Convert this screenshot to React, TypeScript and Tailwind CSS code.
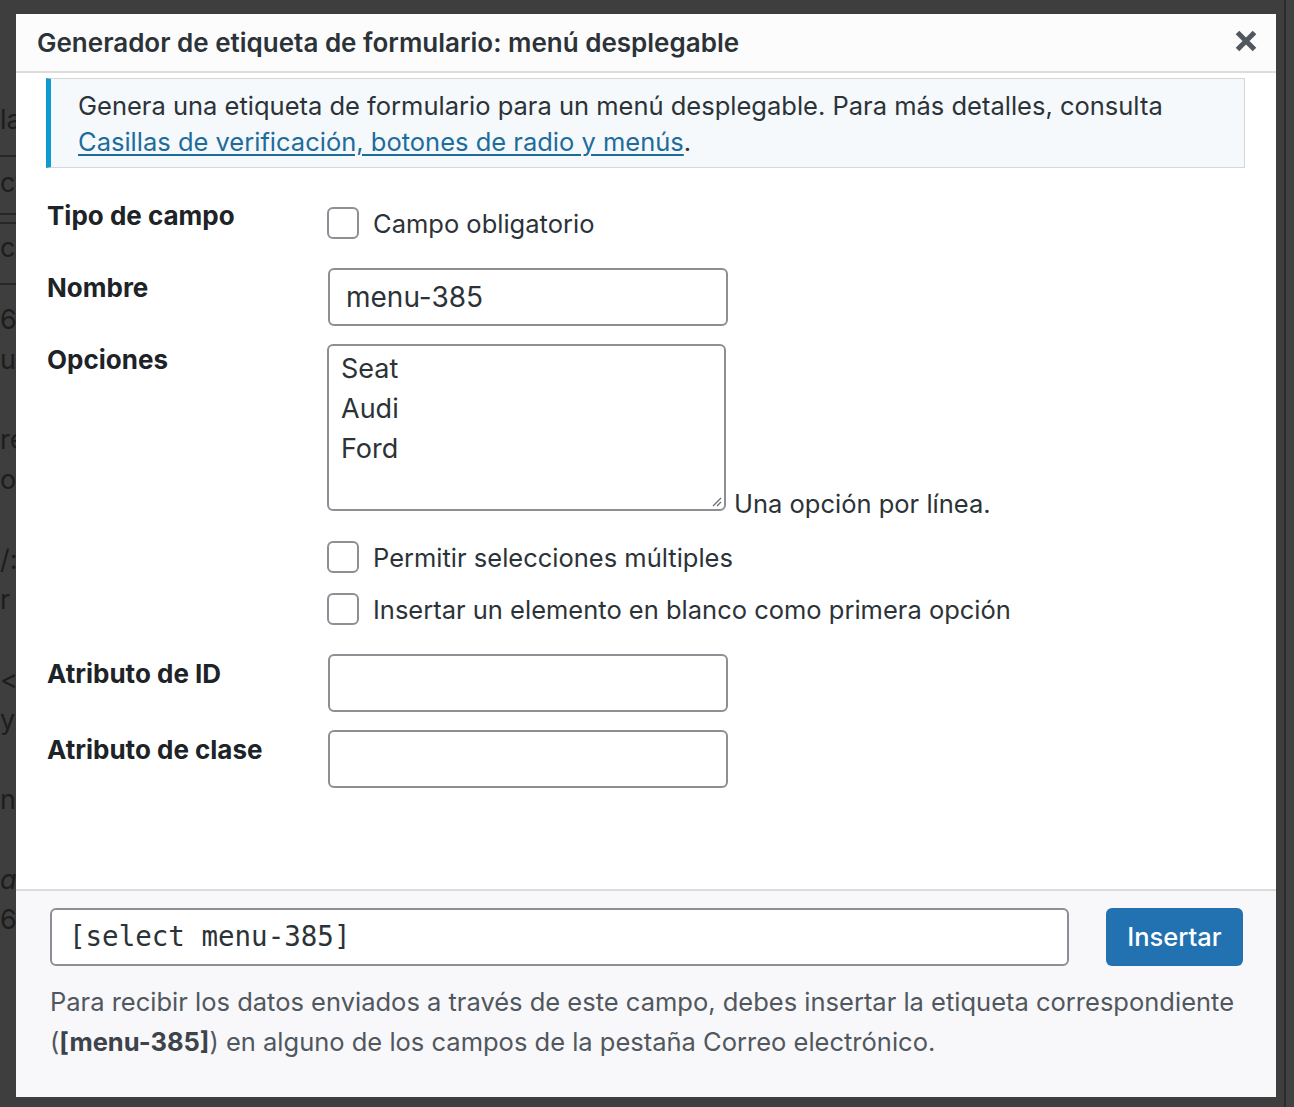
import React from "react";

const FONT = { fontFamily: "Inter, 'Noto Sans', sans-serif" };

function Checkbox() {
  return <span className="block w-[32px] h-[32px] shrink-0 rounded-[6px] border-2 border-[#8c8f94] bg-white" />;
}

function CheckRow({ label }: { label: string }) {
  return (
    <div className="flex items-center gap-[14px] h-[32px]">
      <Checkbox />
      <span className="text-[25.5px] leading-[32px] text-[#2c3338] relative top-[1px]">{label}</span>
    </div>
  );
}

function TextInput({ value, w = "w-[400px]" }: { value?: string; w?: string }) {
  return (
    <div className={`${w} h-[58px] rounded-[6px] border-2 border-[#8c8f94] bg-white flex items-center px-[16px] text-[28px] text-[#2c3338]`}>
      {value}
    </div>
  );
}

const bgLines: { t: string; mt: number; line?: number[]; italic?: boolean }[] = [
  { t: "la", mt: 104, line: [19] },
  { t: "ct", mt: 10, line: [14, 7] },
  { t: "ci", mt: 8, line: [19] },
  { t: "6", mt: 19 },
  { t: "u", mt: 8 },
  { t: "re", mt: 48 },
  { t: "ol", mt: 8 },
  { t: "/:", mt: 48 },
  { t: "r", mt: 8 },
  { t: "<l", mt: 48 },
  { t: "y", mt: 8 },
  { t: "n", mt: 48 },
  { t: "a", mt: 48, italic: true },
  { t: "6", mt: 8 },
];

const LABEL = "text-[26px] leading-[32px] font-bold text-[#1d2327]";

export default function App() {
  return (
    <div className="relative w-[1294px] h-[1107px] overflow-hidden bg-[#3e3e3f] flex" style={FONT}>
      {/* background page behind overlay */}
      <div className="w-[1284px] h-full flex flex-col text-[27px] leading-[32px] text-[#1d1d1e]">
        {bgLines.map((l, i) => (
          <React.Fragment key={i}>
            <div style={{ marginTop: l.mt }} className={`whitespace-nowrap h-[32px] ${l.italic ? "italic" : ""}`}>{l.t}</div>
            {l.line &&
              l.line.map((m, j) => (
                <div key={j} style={{ marginTop: m }} className="h-[2px] w-[40px] bg-[#252627]" />
              ))}
          </React.Fragment>
        ))}
      </div>
      <div className="w-[2px] h-full bg-[#2c2c2d]" />
      <div className="flex-1 h-full bg-[#414142]" />

      {/* modal */}
      <div className="absolute left-[16px] top-[14px] w-[1260px] h-[1083px] bg-white flex flex-col">
        {/* header */}
        <div className="h-[59px] shrink-0 bg-[#fcfcfd] border-b-2 border-[#dcdcde] flex items-center justify-between pl-[21px] pr-[18px]">
          <span className="text-[26px] font-semibold text-[#2c3338] relative top-[0px]">
            Generador de etiqueta de formulario: menú desplegable
          </span>
          <svg width="24" height="24" viewBox="0 0 24 24" className="relative top-[-2px]">
            <path d="M3.5 3.5 L20.5 20.5 M20.5 3.5 L3.5 20.5" stroke="#50575e" strokeWidth="5" strokeLinecap="butt" />
          </svg>
        </div>

        {/* body */}
        <div className="flex-1 flex flex-col pl-[30px] pr-[31px]">
          <div className="mt-[5px] h-[90px] bg-[#f5f9fc] border border-[#d5d7da] border-l-[5px] border-l-[#0f9bcf] pl-[27px] pr-[20px] flex flex-col justify-center pt-[2px] text-[25.5px] leading-[36px] text-[#2c3338]">
            <div>Genera una etiqueta de formulario para un menú desplegable. Para más detalles, consulta</div>
            <div>
              <a href="#" className="text-[#1d6c9c] underline underline-offset-[3px]">Casillas de verificación, botones de radio y menús</a>.
            </div>
          </div>

          {/* form */}
          <div className="flex flex-col pl-[1px]">
            {/* Tipo de campo */}
            <div className="flex mt-[32px]">
              <div className={`w-[280px] ${LABEL}`}>Tipo de campo</div>
              <div className="pt-[7px]">
                <CheckRow label="Campo obligatorio" />
              </div>
            </div>
            {/* Nombre */}
            <div className="flex mt-[29px]">
              <div className={`w-[281px] pt-[4px] ${LABEL}`}>Nombre</div>
              <TextInput value="menu-385" />
            </div>
            {/* Opciones */}
            <div className="flex mt-[18px]">
              <div className={`w-[280px] ${LABEL}`}>Opciones</div>
              <div className="flex flex-col">
                <div className="flex items-end gap-[8px]">
                  <div className="relative w-[399px] h-[167px] rounded-[6px] border-2 border-[#8c8f94] bg-white pl-[12px] pt-[3px] text-[27px] leading-[40px] text-[#2c3338]">
                    <div>Seat</div>
                    <div>Audi</div>
                    <div>Ford</div>
                    <svg width="12" height="12" viewBox="0 0 12 12" className="absolute right-[2px] bottom-[2px]">
                      <path d="M11 3 L3 11 M11 7 L7 11" stroke="#6b6e72" strokeWidth="1.3" />
                    </svg>
                  </div>
                  <span className="text-[25.5px] leading-[32px] text-[#2c3338] mb-[-9px]">Una opción por línea.</span>
                </div>
                <div className="mt-[30px]">
                  <CheckRow label="Permitir selecciones múltiples" />
                </div>
                <div className="mt-[20px]">
                  <CheckRow label="Insertar un elemento en blanco como primera opción" />
                </div>
              </div>
            </div>
            {/* Atributo de ID */}
            <div className="flex mt-[29px]">
              <div className={`w-[281px] pt-[4px] ${LABEL}`}>Atributo de ID</div>
              <TextInput />
            </div>
            {/* Atributo de clase */}
            <div className="flex mt-[18px]">
              <div className={`w-[281px] pt-[4px] ${LABEL}`}>Atributo de clase</div>
              <TextInput />
            </div>
          </div>
        </div>

        {/* footer */}
        <div className="shrink-0 border-t-2 border-[#dcdcde] bg-[#f8f8fa] pl-[34px] pr-[33px] pt-[17px] pb-[35px]">
          <div className="flex items-center justify-between">
            <div
              className="w-[1019px] h-[58px] rounded-[6px] border-2 border-[#8c8f94] bg-white flex items-center px-[17px] text-[27.5px] text-[#2c3338]"
              style={{ fontFamily: "'DejaVu Sans Mono', 'Liberation Mono', monospace" }}
            >
              [select menu-385]
            </div>
            <button className="w-[137px] h-[58px] rounded-[6px] bg-[#2271b1] text-white text-[25.5px] font-medium">
              Insertar
            </button>
          </div>
          <div className="mt-[16px] text-[25.5px] leading-[40px] text-[#50575e]">
            <div>Para recibir los datos enviados a través de este campo, debes insertar la etiqueta correspondiente</div>
            <div>
              (<b className="font-bold text-[#3c434a]">[menu-385]</b>) en alguno de los campos de la pestaña Correo electrónico.
            </div>
          </div>
        </div>
      </div>
    </div>
  );
}
